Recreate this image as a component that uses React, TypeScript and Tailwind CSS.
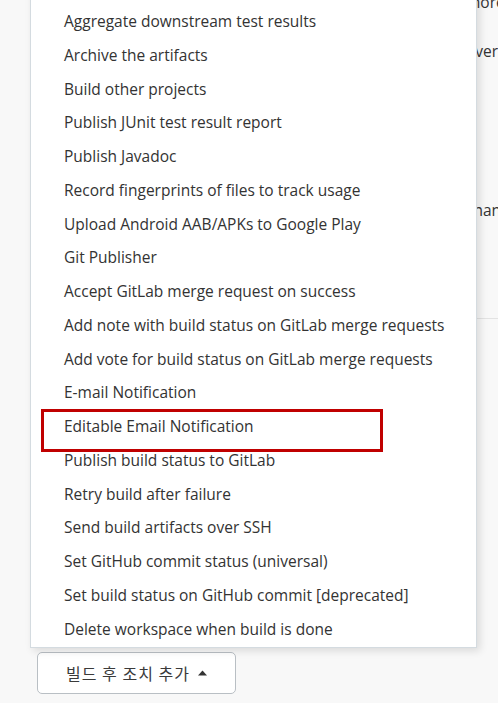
import React from 'react';

const items = [
  'Aggregate downstream test results',
  'Archive the artifacts',
  'Build other projects',
  'Publish JUnit test result report',
  'Publish Javadoc',
  'Record fingerprints of files to track usage',
  'Upload Android AAB/APKs to Google Play',
  'Git Publisher',
  'Accept GitLab merge request on success',
  'Add note with build status on GitLab merge requests',
  'Add vote for build status on GitLab merge requests',
  'E-mail Notification',
  'Editable Email Notification',
  'Publish build status to GitLab',
  'Retry build after failure',
  'Send build artifacts over SSH',
  'Set GitHub commit status (universal)',
  'Set build status on GitHub commit [deprecated]',
  'Delete workspace when build is done',
];

const App = () => {
  return (
    <div
      className="relative w-[498px] h-[703px] overflow-hidden bg-[#f8f8f8] text-[#333] flex flex-col justify-end pl-[37px] pb-[9px]"
      style={{ fontFamily: '"Open Sans", "Noto Sans CJK KR", sans-serif' }}
    >
      {/* page content behind the menu */}
      <div className="absolute left-[466px] top-0 w-[300px] text-[15.5px] whitespace-nowrap flex flex-col">
        <div className="mt-[-9px]">more</div>
        <div className="mt-[26px]">over t</div>
        <div className="mt-[135px]">chan</div>
        <div className="mt-[96px] h-px bg-[#e3e3e3]" />
      </div>

      {/* dropdown menu */}
      <div className="absolute left-[30px] bottom-[55px] w-[447px] bg-white border border-[#d4dbe0] shadow-[3px_3px_8px_rgba(0,0,0,0.12)] pt-[20px] pb-px">
        <ul>
          {items.map((item) => (
            <li
              key={item}
              className="relative h-[33.75px] flex items-center pl-[33px] text-[15.5px] whitespace-nowrap"
            >
              {item}
              {item === 'Editable Email Notification' && (
                <div className="absolute left-[10px] top-[-1px] w-[342px] h-[43px] border-[3px] border-[#c00000]" />
              )}
            </li>
          ))}
        </ul>
      </div>

      {/* button */}
      <button className="w-[199px] h-[42px] flex items-center justify-center gap-2 rounded-[5px] border border-[#b9bfc4] bg-white text-[16px] text-[#3a3a3a] tracking-[1px]">
        <span style={{ fontFamily: '"Noto Sans CJK KR", sans-serif' }}>빌드 후 조치 추가</span>
        <svg width="9" height="6" viewBox="0 0 9 6">
          <path d="M0 5.5 L4.5 0.5 L9 5.5 Z" fill="#333" />
        </svg>
      </button>
    </div>
  );
};

export default App;
